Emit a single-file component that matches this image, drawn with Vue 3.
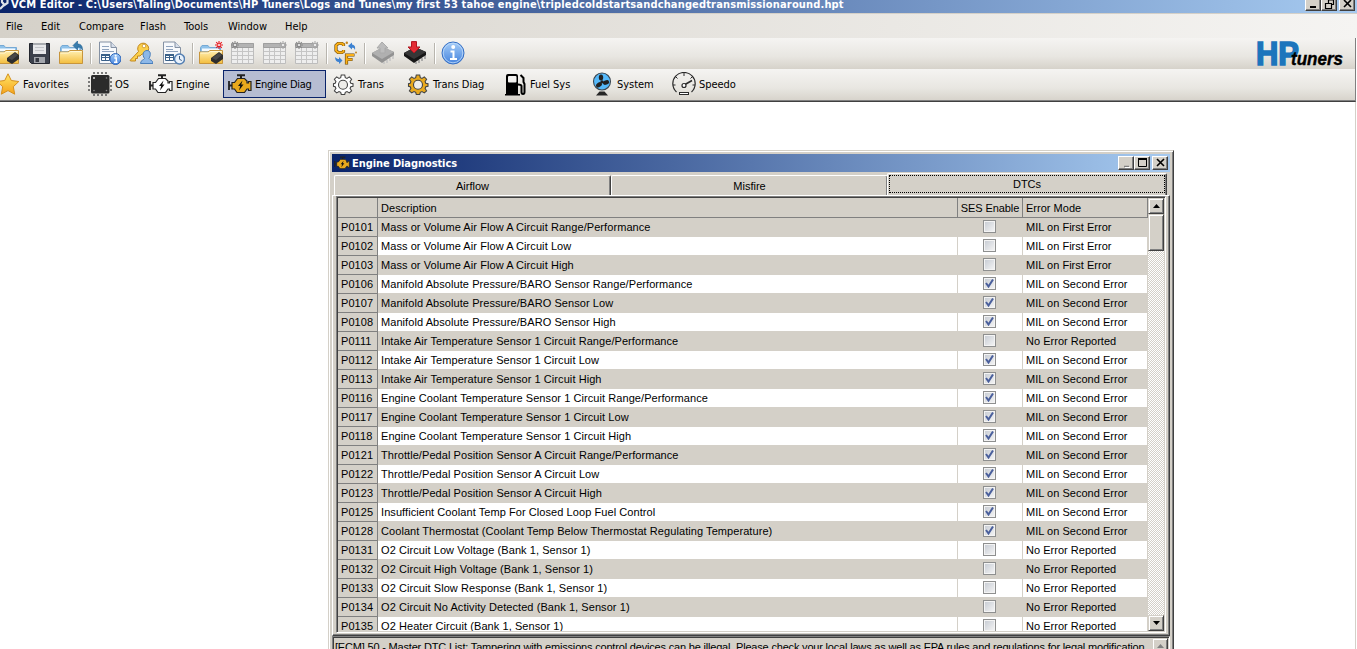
<template>
  <div class="editor">
    <!-- Icon sprites -->
    <svg class="sprites" width="0" height="0">
      <defs>
        <linearGradient id="gold" x1="0" y1="0" x2="0" y2="1">
          <stop offset="0" stop-color="#fff0b4" /><stop offset="1" stop-color="#f3bd3c" />
        </linearGradient>
        <linearGradient id="star-fill" x1="0" y1="0" x2="0" y2="1">
          <stop offset="0" stop-color="#ffe766" /><stop offset="1" stop-color="#f6a21b" />
        </linearGradient>
        <linearGradient id="blue" x1="0" y1="0" x2="0" y2="1">
          <stop offset="0" stop-color="#a5cdf8" /><stop offset="1" stop-color="#4583dd" />
        </linearGradient>
      </defs>
      <symbol id="i-folder" viewBox="0 0 24 24">
        <path d="M1.500 20V6.500L3 4.500H9L10.500 6.500H21.500V20Z" fill="#8fc2ea" stroke="#76a9d4" />
        <path d="M3 7.500H20V10H3Z" fill="#f4faff" />
        <path d="M.500 11H9L11 9.500H23.500V22.500H.500Z" fill="url(#gold)" stroke="#c7953c" />
        <path d="M1.500 12H9.500L11.500 10.500H22.500" fill="none" stroke="#fff8d8" />
      </symbol>
      <symbol id="i-open" viewBox="0 0 24 24">
        <use href="#i-folder" width="24" height="24" />
        <path d="M12 17L20 11L24 14V18L17 23L12 20Z" fill="#2d2d2d" />
        <path d="M13 17L20 12L23 14L17 19Z" fill="#484848" />
      </symbol>
      <symbol id="i-save" viewBox="0 0 24 24">
        <path d="M2.500 2.500H22.500V22.500H4.500L2.500 20.500Z" fill="#3c414c" stroke="#23262e" />
        <path d="M6 2H19V13H6Z" fill="#e6e7e9" />
        <path d="M6 2H19V4H6Z" fill="#a9acb0" />
        <path d="M8 6.500H17M8 9.500H17" stroke="#c3c5c9" />
        <path d="M7 16H18V22H7Z" fill="#a3a6ac" />
        <path d="M8.500 17H12V21H8.500Z" fill="#363a43" />
      </symbol>
      <symbol id="i-folder-up" viewBox="0 0 24 24">
        <use href="#i-folder" width="24" height="24" />
        <path d="M14 4.500L18.500 0V3C22 3 23.500 5 23.500 9C22 6.500 21 6 18.500 6V9Z" fill="#397cad" stroke="#1f5f91" stroke-width=".6" />
      </symbol>
      <symbol id="i-doc" viewBox="0 0 24 24">
        <path d="M2.500 1H14L19.500 6.500V22.500H2.500Z" fill="#f7f9fc" stroke="#8491a3" />
        <path d="M14 1V6.500H19.500" fill="#d6deea" stroke="#8491a3" />
        <path d="M5 5.500H12M5 8.500H12M5 10.500H17" stroke="#8ea2bd" />
        <path d="M4.500 13.500H12.500V19.500H4.500ZM4.500 16.500H12.500M8.500 13.500V19.500" fill="#fff" stroke="#3a6189" />
        <path d="M4 13H13V15H4Z" fill="#3a6189" />
      </symbol>
      <symbol id="i-doc-info" viewBox="0 0 24 24">
        <use href="#i-doc" width="24" height="24" />
        <circle cx="18.500" cy="18" r="5.500" fill="url(#blue)" stroke="#2962b7" />
        <path d="M17.300 17H19.300V21M17 21.300H20.500" stroke="#fff" stroke-width="1.500" fill="none" />
        <circle cx="18.700" cy="14.800" r="1" fill="#fff" />
      </symbol>
      <symbol id="i-key-user" viewBox="0 0 24 24">
        <path d="M1 19.500L9.500 10.500A5.500 5.500 0 1 1 13 13L11 15H8.500V17.500H6.500V20H2Z" fill="#fbd04c" stroke="#c2881e" />
        <circle cx="15" cy="5" r="1.800" fill="#fff" stroke="#c2881e" stroke-width=".7" />
        <path d="M11.500 22.500C11.500 19 15 19 15.500 17.500C13 14 14 9.500 18 9.500S22 14 20 17.500C20.500 19 24 19 24 22.500Z" fill="#8db8e8" stroke="#497fbc" />
      </symbol>
      <symbol id="i-doc-clock" viewBox="0 0 24 24">
        <use href="#i-doc" width="24" height="24" />
        <circle cx="18.500" cy="18" r="5" fill="#e8f1fb" stroke="#5580b3" stroke-width="1.500" />
        <path d="M18.500 15V18.300L20.800 19.500" fill="none" stroke="#3c5c83" />
      </symbol>
      <symbol id="i-burst" viewBox="0 0 8 8">
        <path d="M4 0V8M0 4H8M1.200 1.200L6.800 6.800M6.800 1.200L1.200 6.800" stroke="currentColor" stroke-width="1.100" />
        <circle cx="4" cy="4" r="1" fill="#fff" />
      </symbol>
      <symbol id="i-folder-new" viewBox="0 0 24 24">
        <use href="#i-open" width="24" height="24" />
        <use href="#i-burst" x="16" y="0" width="8" height="8" color="#e8191f" />
      </symbol>
      <symbol id="i-grid" viewBox="0 0 24 24">
        <path d="M.500 2.500H22.500V22.500H.500Z" fill="#eee" stroke="#bdbdbd" />
        <path d="M.500 2.500H22.500V6.500H.500Z" fill="#b3b3b3" stroke="#9f9f9f" />
        <path d="M1 10.500H22M1 14.500H22M1 18.500H22M6.500 7V22M11.500 7V22M17.500 7V22" stroke="#c5c5c5" />
      </symbol>
      <symbol id="i-table-left" viewBox="0 0 24 24">
        <use href="#i-grid" width="24" height="24" />
        <use href="#i-burst" x="0" y="0" width="8" height="8" color="#888" />
      </symbol>
      <symbol id="i-table-right" viewBox="0 0 24 24">
        <use href="#i-grid" width="24" height="24" />
        <use href="#i-burst" x="16" y="0" width="8" height="8" color="#aaa" />
      </symbol>
      <symbol id="i-table-both" viewBox="0 0 24 24">
        <use href="#i-grid" width="24" height="24" />
        <use href="#i-burst" x="0" y="0" width="8" height="8" color="#888" />
        <use href="#i-burst" x="16" y="0" width="8" height="8" color="#aaa" />
      </symbol>
      <symbol id="i-units" viewBox="0 0 24 24">
        <path d="M10.500 5V3.500L9 2.500H5L3 4.500V9.500L5 11.500H9L10.500 10.500V9" fill="none" stroke="#6b4a10" stroke-width="3.200" />
        <path d="M10.500 5V3.500L9 2.500H5L3 4.500V9.500L5 11.500H9L10.500 10.500V9" fill="none" stroke="#fbb016" stroke-width="1.900" />
        <path d="M13.500 23.500V14H21.500M13.500 18.500H19.500" fill="none" stroke="#6b4a10" stroke-width="3.200" />
        <path d="M13.500 23V14H21M13.500 18.500H19" fill="none" stroke="#fbb016" stroke-width="1.900" />
        <circle cx="13.800" cy="1.800" r="1.200" fill="#c18522" /><circle cx="23" cy="11.500" r="1" fill="#c18522" />
        <path d="M15 5L19 1.500V3.500C22 4 22.500 6 22 9C21 7 20.500 6.800 19 6.800V8.500Z" fill="#3d82d2" />
        <path d="M9.500 19.500L6 23V21C3.500 21 2 19 2 16C3.500 17.500 4.500 18 6 18V16Z" fill="#3d82d2" />
      </symbol>
      <symbol id="i-chip-read" viewBox="0 0 24 24">
        <path d="M13 21V23M16 19V22M19 17V20M22 14V18" stroke="#c4c4c4" stroke-width="1.500" />
        <path d="M1 12L12 6L23 11V14L11 22L1 15Z" fill="#929292" />
        <path d="M1 12L12 6L23 11L11 18Z" fill="#b0b0b0" />
        <path d="M11 1L17 7H14V12H9V7H6Z" fill="#bcbcbc" stroke="#aaa" />
      </symbol>
      <symbol id="i-chip-write" viewBox="0 0 24 24">
        <path d="M13 21V23M16 19V22M19 17V20M22 14V18" stroke="#999" stroke-width="1.500" />
        <path d="M1 12L12 6L23 11V14L11 22L1 15Z" fill="#171717" />
        <path d="M1 12L12 6L23 11L11 18Z" fill="#373737" />
        <path d="M8.500 .600H13.500V6H17L11 12L5 6H8.500Z" fill="#e32d35" stroke="#af1721" />
      </symbol>
      <symbol id="i-info" viewBox="0 0 24 24">
        <circle cx="12" cy="12" r="11" fill="url(#blue)" stroke="#356fc4" />
        <circle cx="12" cy="12" r="9.800" fill="none" stroke="#c0dcfa" stroke-width=".8" />
        <circle cx="12.200" cy="6" r="2" fill="#fff" />
        <path d="M9.500 10.500H12.500V18M9 18H16" fill="none" stroke="#fff" stroke-width="2" />
      </symbol>
      <symbol id="i-star" viewBox="0 0 24 24">
        <path d="M12 1.800L15.300 8.500L22.800 9.500L17.300 14.700L18.700 22.200L12 18.600L5.300 22.200L6.700 14.700L1.200 9.500L8.700 8.500Z" fill="url(#star-fill)" stroke="#d5901d" stroke-linejoin="round" />
      </symbol>
      <symbol id="i-os" viewBox="0 0 24 24">
        <path d="M5 1H20M5 23H20" stroke="#555" stroke-width="1.500" stroke-dasharray="2 2" />
        <path d="M1 5V20M23 5V20" stroke="#555" stroke-width="1.500" stroke-dasharray="2 2" />
        <rect x="3" y="3" width="18.500" height="18.500" rx="1.500" fill="#2b2b2b" />
        <circle cx="6" cy="6" r="1" fill="#ddd" />
        <circle cx="18.500" cy="6" r=".8" fill="#888" /><circle cx="6" cy="18.500" r=".8" fill="#888" /><circle cx="18.500" cy="18.500" r=".8" fill="#888" />
      </symbol>
      <symbol id="i-engine" viewBox="0 0 24 24">
        <path d="M9 3.200H17M13 3V6" stroke="#222" stroke-width="2" />
        <path d="M1 9V18M1 13.500H4M19 13.500H23" stroke="#222" stroke-width="1.800" />
        <path d="M4 10.500H6.500L9.500 6.500H16.500L19 9V11H20.500V9.500H23V18.500H20.500V17H19L16.500 20.500H9L6.500 17H4Z" fill="currentColor" stroke="#222" stroke-width="1.200" />
        <path d="M14.500 8.500L10 14H12.200L11 18.500L15.500 12.500H13.200Z" fill="#111" />
      </symbol>
      <symbol id="i-gear" viewBox="0 0 24 24">
        <path d="M10.300 3H13.700L14.300 5.700L16 6.400L18.300 4.900L20.600 7.200L19.100 9.500L19.800 11.200L22 11.700V14.300L19.800 14.800L19.100 16.500L20.600 18.800L18.300 20.900L16 19.600L14.300 20.300L13.700 22.500H10.300L9.700 20.300L8 19.600L5.700 20.900L3.400 18.800L4.900 16.500L4.200 14.800L2.500 14.300V11.700L4.200 11.200L4.900 9.500L3.400 7.200L5.700 4.900L8 6.400L9.700 5.700Z" fill="currentColor" stroke="#444" stroke-width="1.100" />
        <circle cx="12" cy="12.800" r="4.500" fill="#eeedea" stroke="#444" stroke-width="1.100" />
      </symbol>
      <symbol id="i-fuel" viewBox="0 0 24 24">
        <path d="M3 22V4Q3 2 5 2H13Q15 2 15 4V22H17V23.500H2V22Z" fill="#000" />
        <rect x="5" y="4" width="8.500" height="6.500" rx="1" fill="#f3f2f0" />
        <path d="M17.500 3L20.500 6V10L21.500 12V20Q21.500 22 20 22T18.500 20V14Q18.500 12.500 15 12.500" fill="none" stroke="#000" stroke-width="2" />
      </symbol>
      <symbol id="i-fan" viewBox="0 0 24 24">
        <circle cx="12" cy="9.500" r="8.500" fill="#55b9fa" stroke="#3b4650" stroke-width="1.100" />
        <g fill="#222">
          <ellipse cx="11" cy="5.500" rx="2.200" ry="3" />
          <ellipse cx="16" cy="10.500" rx="3.200" ry="2.200" transform="rotate(-20 16 10.500)" />
          <ellipse cx="9" cy="12.800" rx="3.200" ry="2.200" transform="rotate(-35 9 12.800)" />
          <circle cx="12" cy="9.800" r="1.600" />
        </g>
        <path d="M9.500 19.500H14.500L18 23.500H6Z" fill="#262626" />
      </symbol>
      <symbol id="i-gauge" viewBox="0 0 24 24">
        <path d="M4.500 20A11.200 11.200 0 1 1 19.500 20" fill="none" stroke="#2a2a2a" stroke-width="1.200" />
        <path d="M12 1V4M4 5L5.500 6.500M20 5L18.500 6.500M1 13H3.500M23 13H20.500" stroke="#2a2a2a" />
        <path d="M13 12.500L20 8.500" stroke="#2a2a2a" stroke-width="1.500" />
        <circle cx="12" cy="13.500" r="2" fill="#fff" stroke="#2a2a2a" stroke-width="1.200" />
        <rect x="7.500" y="20.500" width="9" height="2" fill="#fff" stroke="#2a2a2a" />
      </symbol>
    </svg>

    <header class="titlebar">
      <svg class="wrench" viewBox="0 0 9 13">
        <path d="M0 9L3.500 5.500M2 0V2L4.500 5L7.500 3V0" fill="none" stroke="#dde3ea" stroke-width="2.200" />
      </svg>
      <span class="titlebar-text">VCM Editor - C:\Users\Taling\Documents\HP Tuners\Logs and Tunes\my first 53 tahoe engine\tripledcoldstartsandchangedtransmissionaround.hpt</span>
      <div class="win-buttons">
        <span class="win-btn"><svg viewBox="0 0 12 10"><path d="M2 8H8" stroke="#000" stroke-width="2" /></svg></span>
        <span class="win-btn"><svg viewBox="0 0 12 10"><path d="M4 1H10M9.500 1V5.500H8M4.500 1V4M1 4.500H7M1.500 4V9.500H7.500V4" stroke="#000" fill="none" stroke-width="1.200" /></svg></span>
        <span class="win-btn win-btn--close"><svg viewBox="0 0 12 10"><path d="M2 1L9 8M9 1L2 8" stroke="#000" stroke-width="1.600" /></svg></span>
      </div>
    </header>

    <nav class="menu">
      <span v-for="m in menu" :key="m.label" class="menu-item" :style="{ width: m.width + 'px' }">{{ m.label }}</span>
    </nav>

    <div class="toolbar toolbar--main">
      <template v-for="(group, g) in tools" :key="g">
        <span v-if="g" class="sep"></span>
        <svg v-for="name in group" :key="name" class="tool"><use :href="'#i-' + name" /></svg>
      </template>
      <svg class="logo" viewBox="0 0 92 28">
        <text x="0" y="26" class="logo-hp" textLength="43" lengthAdjust="spacingAndGlyphs">HP</text>
        <text x="35" y="26" class="logo-tuners" textLength="52" lengthAdjust="spacingAndGlyphs">tuners</text>
      </svg>
    </div>

    <div class="toolbar toolbar--nav">
      <div
        v-for="s in sections"
        :key="s.label"
        class="section"
        :class="{ 'section--active': s.active }"
        :style="{ width: s.width + 'px' }"
      >
        <svg class="section-icon" :class="{ gold: s.gold }"><use :href="'#i-' + s.icon" /></svg>
        <span class="section-label">{{ s.label }}</span>
      </div>
    </div>

    <main class="workspace">
      <section class="dialog">
        <div class="dialog-title">
          <svg class="dialog-icon gold"><use href="#i-engine" /></svg>
          <span class="dialog-name">Engine Diagnostics</span>
          <div class="win-buttons">
            <span class="win-btn"><svg viewBox="0 0 12 10"><path d="M3 8.500H8" stroke="#808080" stroke-width="1.500" /><path d="M4 9.500H9" stroke="#fff" /></svg></span>
            <span class="win-btn"><svg viewBox="0 0 12 10"><path d="M1.500 1V8.500H9.500V1M1 1H10" stroke="#000" fill="none" /><path d="M1 1H10" stroke="#000" stroke-width="2" /></svg></span>
            <span class="win-btn win-btn--close"><svg viewBox="0 0 12 10"><path d="M2 1L9 8M9 1L2 8" stroke="#000" stroke-width="1.600" /></svg></span>
          </div>
        </div>

        <div class="tabs">
          <div class="tab">Airflow</div>
          <div class="tab">Misfire</div>
          <div class="tab tab--active"><span class="tab-focus">DTCs</span></div>
        </div>

        <div class="page">
          <div class="list">
            <div class="grid">
              <div class="row row--head">
                <span class="code"></span>
                <span class="desc">Description</span>
                <span class="ses">SES Enable</span>
                <span class="mode">Error Mode</span>
              </div>
              <div v-for="row in rows" :key="row[0]" class="row">
                <span class="code">{{ row[0] }}</span>
                <span class="desc">{{ row[1] }}</span>
                <span class="ses">
                  <span class="check">
                    <svg v-if="row[2] === 2" viewBox="0 0 9 9"><path d="M1 4L3.500 7.500L8 .500" fill="none" stroke="#4a5f9c" stroke-width="2" /></svg>
                  </span>
                </span>
                <span class="mode">{{ modes[row[2]] }}</span>
              </div>
            </div>
            <div class="scroll">
              <span class="scroll-btn"><svg viewBox="0 0 7 4"><path d="M0 4L3.500 0L7 4Z" /></svg></span>
              <span class="scroll-thumb"></span>
              <span class="scroll-track"></span>
              <span class="scroll-btn"><svg viewBox="0 0 7 4"><path d="M0 0L3.500 4L7 0Z" /></svg></span>
            </div>
          </div>
        </div>

        <div class="notes">
          <span class="notes-text">[ECM] 50 - Master DTC List: Tampering with emissions control devices can be illegal. Please check your local laws as well as EPA rules and regulations for legal modification</span>
          <span class="scroll-btn scroll-btn--off"><svg viewBox="0 0 7 4"><path d="M0 4L3.500 0L7 4Z" /></svg></span>
        </div>
      </section>
    </main>
  </div>
</template>

<script setup>
const menu = [
  { label: 'File', width: 35 },
  { label: 'Edit', width: 38 },
  { label: 'Compare', width: 61 },
  { label: 'Flash', width: 44 },
  { label: 'Tools', width: 44 },
  { label: 'Window', width: 57 },
  { label: 'Help', width: 40 },
]

const tools = [
  ['open', 'save', 'folder-up'],
  ['doc-info', 'key-user', 'doc-clock'],
  ['folder-new', 'table-left', 'table-right', 'table-both'],
  ['units'],
  ['chip-read', 'chip-write'],
  ['info'],
]

const sections = [
  { label: 'Favorites', icon: 'star', width: 92 },
  { label: 'OS', icon: 'os', width: 61 },
  { label: 'Engine', icon: 'engine', width: 79 },
  { label: 'Engine Diag', icon: 'engine', width: 103, gold: true, active: true },
  { label: 'Trans', icon: 'gear', width: 75 },
  { label: 'Trans Diag', icon: 'gear', width: 97, gold: true },
  { label: 'Fuel Sys', icon: 'fuel', width: 87 },
  { label: 'System', icon: 'fan', width: 82 },
  { label: 'Speedo', icon: 'gauge', width: 80 },
]

// 0 = not reported, 1 = first error, 2 = second error (SES enabled)
const modes = ['No Error Reported', 'MIL on First Error', 'MIL on Second Error']

const rows = [
  ['P0101', 'Mass or Volume Air Flow A Circuit Range/Performance', 1],
  ['P0102', 'Mass or Volume Air Flow A Circuit Low', 1],
  ['P0103', 'Mass or Volume Air Flow A Circuit High', 1],
  ['P0106', 'Manifold Absolute Pressure/BARO Sensor Range/Performance', 2],
  ['P0107', 'Manifold Absolute Pressure/BARO Sensor Low', 2],
  ['P0108', 'Manifold Absolute Pressure/BARO Sensor High', 2],
  ['P0111', 'Intake Air Temperature Sensor 1 Circuit Range/Performance', 0],
  ['P0112', 'Intake Air Temperature Sensor 1 Circuit Low', 2],
  ['P0113', 'Intake Air Temperature Sensor 1 Circuit High', 2],
  ['P0116', 'Engine Coolant Temperature Sensor 1 Circuit Range/Performance', 2],
  ['P0117', 'Engine Coolant Temperature Sensor 1 Circuit Low', 2],
  ['P0118', 'Engine Coolant Temperature Sensor 1 Circuit High', 2],
  ['P0121', 'Throttle/Pedal Position Sensor A Circuit Range/Performance', 2],
  ['P0122', 'Throttle/Pedal Position Sensor A Circuit Low', 2],
  ['P0123', 'Throttle/Pedal Position Sensor A Circuit High', 2],
  ['P0125', 'Insufficient Coolant Temp For Closed Loop Fuel Control', 2],
  ['P0128', 'Coolant Thermostat (Coolant Temp Below Thermostat Regulating Temperature)', 2],
  ['P0131', 'O2 Circuit Low Voltage (Bank 1, Sensor 1)', 0],
  ['P0132', 'O2 Circuit High Voltage (Bank 1, Sensor 1)', 0],
  ['P0133', 'O2 Circuit Slow Response (Bank 1, Sensor 1)', 0],
  ['P0134', 'O2 Circuit No Activity Detected (Bank 1, Sensor 1)', 0],
  ['P0135', 'O2 Heater Circuit (Bank 1, Sensor 1)', 0],
]
</script>

<style>
html, body {
  margin: 0;
  overflow: hidden;
}
</style>

<style scoped>
.editor {
  display: flex;
  flex-direction: column;
  width: 1357px;
  height: 649px;
  overflow: hidden;
  background: #fff;
  color: #000;
  font: 11px "DejaVu Sans Condensed", "DejaVu Sans", sans-serif;
  font-stretch: condensed;
  white-space: nowrap;
}

.editor * {
  box-sizing: border-box;
}

.sprites {
  position: absolute;
}

/* Main title bar */
.titlebar {
  display: flex;
  align-items: flex-start;
  flex: none;
  height: 14px;
  overflow: hidden;
  color: #fff;
  font-weight: bold;
  background: linear-gradient(90deg, #0a246a, #a6caf0);
  border-bottom: 1px solid #d4d0c8;
}

.wrench {
  width: 9px;
  height: 13px;
  margin-right: 2px;
}

.titlebar-text {
  height: 13px;
  line-height: 13px;
  margin-top: -2px;
  letter-spacing: 0.153px;
}

.win-buttons {
  display: flex;
  margin-left: auto;
}

.win-btn {
  display: block;
  width: 16px;
  height: 14px;
  padding: 1px 0 0 2px;
  background: #d4d0c8;
  border: 1px solid;
  border-color: #fff #404040 #404040 #fff;
  box-shadow: inset -1px -1px #808080;
}

.win-btn svg {
  display: block;
  width: 12px;
  height: 10px;
}

.win-btn--close {
  margin-left: 2px;
}

.titlebar .win-buttons {
  margin-top: -3px;
  margin-right: 2px;
}

/* Menu */
.menu {
  display: flex;
  flex: none;
  height: 24px;
  padding-left: 6px;
  line-height: 25px;
  background: linear-gradient(90deg, #d5d1c9, #f5f4f2);
}

.menu-item {
  flex: none;
}

/* Toolbars */
.toolbar {
  display: flex;
  align-items: center;
  flex: none;
  width: 1356px;
  background: linear-gradient(#f5f4f2, #e8e6e1 60%, #d6d2ca);
  border-right: 1px solid #808080;
}

.toolbar--main {
  height: 31px;
  padding-bottom: 1px;
}

.tool {
  flex: none;
  width: 24px;
  height: 24px;
  margin-right: 8px;
}

.tool:first-child {
  margin-left: -5px;
}

.sep {
  width: 2px;
  height: 21px;
  margin: 0 5px 0 -1px;
  background: #b8b5ae;
  border-right: 1px solid #fff;
}

.logo {
  width: 92px;
  height: 28px;
  margin: -1px 7px 0 auto;
  overflow: visible;
}

.logo-hp {
  fill: #1c75bc;
  stroke: #1c75bc;
  stroke-width: 1.6px;
  font: bold 33px "Liberation Sans", Arial, sans-serif;
}

.logo-tuners {
  fill: #000;
  stroke: #000;
  stroke-width: 0.4px;
  font: italic bold 19px "Liberation Sans", Arial, sans-serif;
}

.toolbar--nav {
  height: 33px;
  padding-bottom: 2px;
  border-bottom: 1px solid #404040;
  box-shadow: inset 0 -1px #808080;
}

.section {
  display: flex;
  align-items: center;
  flex: none;
  height: 28px;
}

.section:first-child {
  margin-left: -4px;
}

.section--active {
  margin-left: -5px;
  margin-right: 5px;
  padding-left: 4px;
  background: #b6bdd2;
  border: 1px solid #0a246a;
}

.section-icon {
  flex: none;
  width: 24px;
  height: 24px;
  margin-right: 3px;
  color: #fff;
}

.gold {
  color: #e9a91d;
}

.section-label {
  letter-spacing: -0.05px;
}

.section:first-child .section-label {
  letter-spacing: 0.15px;
}

.section--active .section-label {
  letter-spacing: -0.3px;
}

/* Workspace */
.workspace {
  flex: 1;
  width: 1356px;
  min-height: 0;
  padding: 48px 0 0 328px;
  overflow: hidden;
  border-right: 1px solid #d4d0c8;
}

.dialog {
  width: 846px;
  height: 520px;
  padding: 3px;
  background: #d4d0c8;
  border: 1px solid;
  border-color: #d4d0c8 #404040 #404040 #d4d0c8;
  box-shadow: inset 1px 1px #fff, inset -1px -1px #808080;
  font-family: "Liberation Sans", Arial, sans-serif;
}

.dialog-title {
  display: flex;
  align-items: center;
  height: 18px;
  padding: 0 2px;
  color: #fff;
  background: linear-gradient(90deg, #0a246a, #a6caf0);
}

.dialog-icon {
  width: 16px;
  height: 16px;
  margin-right: 2px;
}

.dialog-name {
  font: bold 11px "DejaVu Sans Condensed", "DejaVu Sans", sans-serif;
  font-stretch: condensed;
  letter-spacing: -0.08px;
}

.tabs {
  display: flex;
  align-items: flex-end;
  height: 23px;
  padding: 0 3px 0 2px;
}

.tab {
  width: 277px;
  height: 20px;
  line-height: 20px;
  text-align: center;
  border: 1px solid #fff;
  border-right-color: #404040;
  border-bottom: 0;
  border-radius: 2px 2px 0 0;
  box-shadow: inset -1px 0 #808080;
}

.tab--active {
  width: 280px;
  height: 22px;
  padding: 1px;
  margin-left: -1px;
}

.tab-focus {
  display: block;
  height: 18px;
  line-height: 16px;
  border: 1px dotted #000;
}

.page {
  height: 441px;
  padding: 1px 3px 3px 4px;
  border: 1px solid;
  border-color: #fff #404040 #404040 #fff;
  box-shadow: inset -1px -1px #808080;
}

.list {
  display: flex;
  width: 830px;
  height: 437px;
  margin: -1px 0 0 -1px;
  padding: 1px;
  border: 1px solid;
  border-color: #808080 #fff #fff #808080;
  box-shadow: inset 1px 1px #404040, inset -1px -1px #d4d0c8;
}

.grid {
  width: 810px;
  height: 433px;
  overflow: hidden;
  background: #fff;
}

.row {
  display: grid;
  grid-template-columns: 40px 580px 65px 125px;
  grid-template-rows: 100%;
  height: 19px;
  line-height: 18px;
  background: #fff;
}

.row:nth-child(even) {
  background: #d4d0c8;
}

.row > span {
  padding-left: 3px;
  border-right: 1px solid #d4d0c8;
  border-bottom: 1px solid #d4d0c8;
  letter-spacing: 0.07px;
}

.row > .code {
  background: #d4d0c8;
  border-color: #808080;
}

.row > .mode {
  letter-spacing: 0.02px;
}

.row--head {
  height: 20px;
  line-height: 20px;
  background: #d4d0c8;
}

.row--head > span {
  border-color: #808080;
}

.row > .ses {
  display: flex;
  justify-content: center;
  padding: 2px 1px 0 0;
}

.row--head > .ses {
  padding: 0;
  letter-spacing: -0.1px;
}

.check {
  display: block;
  flex: none;
  width: 13px;
  height: 13px;
  padding: 1px;
  background: linear-gradient(135deg, #c5cad2, #f6f6f6);
  border: 1px solid #8e8f8f;
  box-shadow: inset 0 0 0 1px #f4f4f4;
}

.check svg {
  display: block;
  width: 9px;
  height: 9px;
}

/* Scroll bar */
.scroll {
  display: flex;
  flex-direction: column;
  width: 16px;
  height: 433px;
}

.scroll-btn {
  display: flex;
  align-items: center;
  justify-content: center;
  flex: none;
  width: 16px;
  height: 16px;
  background: #d4d0c8;
  border: 1px solid;
  border-color: #d4d0c8 #404040 #404040 #d4d0c8;
  box-shadow: inset 1px 1px #fff, inset -1px -1px #808080;
}

.scroll-btn svg {
  width: 7px;
  height: 4px;
}

.scroll-thumb {
  flex: none;
  height: 37px;
  background: #d4d0c8;
  border: 1px solid;
  border-color: #d4d0c8 #404040 #404040 #d4d0c8;
  box-shadow: inset 1px 1px #fff, inset -1px -1px #808080;
}

.scroll-track {
  flex: 1;
  background: repeating-conic-gradient(#fff 0 25%, #d4d0c8 0 50%) 0 0 / 2px 2px;
}

/* Bottom notes */
.notes {
  display: flex;
  justify-content: space-between;
  height: 40px;
  padding: 1px 1px 0 2px;
  border: 1px solid;
  border-color: #808080 #fff #fff #808080;
  box-shadow: inset 1px 1px #404040;
}

.notes-text {
  line-height: 18px;
  letter-spacing: -0.185px;
}

.scroll-btn--off {
  fill: #808080;
}
</style>
